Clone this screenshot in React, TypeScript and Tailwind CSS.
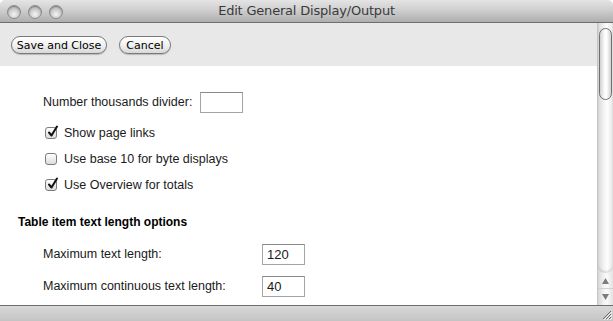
import React from 'react';

const Check: React.FC<{ checked: boolean }> = ({ checked }) => (
    <span className="relative w-[12px] h-[12px] rounded-[3px] border border-[#7d7d7d] bg-gradient-to-b from-white to-[#dcdcdc] shrink-0">
        {checked && (
            <svg className="absolute left-[1px] top-[-3px]" width="12" height="13" viewBox="0 0 12 13">
                <path d="M2 7.5 L4.5 10.5 L10 1.5" fill="none" stroke="#111" strokeWidth="2" strokeLinecap="round" strokeLinejoin="round" />
            </svg>
        )}
    </span>
);

const Light: React.FC = () => (
    <span className="w-[14px] h-[14px] rounded-full border border-[#8a8a8a] bg-[radial-gradient(circle_at_50%_70%,#f4f4f4,#c6c6c6_55%,#9c9c9c)] shadow-[inset_0_1px_1px_rgba(0,0,0,0.25)]" />
);

const AquaButton: React.FC<{ label: string; width: string }> = ({ label, width }) => (
    <button className={`${width} h-[18px] rounded-full border border-[#7a7a7a] bg-gradient-to-b from-white via-[#f2f2f2] to-[#d8d8d8] text-[11px] text-black leading-none shadow-[0_1px_1px_rgba(0,0,0,0.2)]`}>
        {label}
    </button>
);

const App: React.FC = () => {
    const options = [
        { label: 'Show page links', checked: true },
        { label: 'Use base 10 for byte displays', checked: false },
        { label: 'Use Overview for totals', checked: true },
    ];

    return (
        <div className="w-[613px] h-[321px] flex flex-col overflow-hidden bg-white font-['Liberation_Sans',Arial,sans-serif]">
            {/* title bar */}
            <div className="relative h-[23px] shrink-0 flex items-center rounded-t-[5px] border-b border-[#6e6e6e] bg-[linear-gradient(#e4e4e4,#cfcfcf_45%,#aeaeae)]">
                <div className="flex gap-[7px] pl-[7px] pt-[1px]">
                    <Light />
                    <Light />
                    <Light />
                </div>
                <div className="absolute inset-x-0 top-0 h-[22px] flex items-center justify-center text-[13px] text-[#3a3a3a] font-['DejaVu_Sans',sans-serif] tracking-[-0.2px]">
                    Edit General Display/Output
                </div>
            </div>

            <div className="flex-1 flex min-h-0">
                <div className="flex-1 flex flex-col">
                    {/* toolbar */}
                    <div className="h-[43px] shrink-0 bg-[#e8e8e8] flex items-start pt-[13px] pl-[11px] gap-[12px] font-['DejaVu_Sans',sans-serif]">
                        <AquaButton label="Save and Close" width="w-[96px]" />
                        <AquaButton label="Cancel" width="w-[52px]" />
                    </div>

                    {/* content */}
                    <div className="flex-1 pt-[26px] text-[12.5px] text-[#1a1a1a]">
                        <div className="h-[21px] flex items-center pl-[43px]">
                            <span>Number thousands divider:</span>
                            <input className="ml-[8px] w-[43px] h-[21px] border border-[#a5a5a5] border-t-[#8a8a8a] bg-white outline-none" />
                        </div>

                        <div className="mt-[10px] flex flex-col gap-[6px] pl-[45px]">
                            {options.map(o => (
                                <label key={o.label} className="h-[20px] flex items-center gap-[7px]">
                                    <Check checked={o.checked} />
                                    <span>{o.label}</span>
                                </label>
                            ))}
                        </div>

                        <div className="mt-[19px] h-[16px] flex items-center pl-[18px] text-[12px] font-bold text-black">
                            Table item text length options
                        </div>

                        <div className="mt-[14px] h-[21px] flex items-center pl-[43px]">
                            <span className="w-[219px]">Maximum text length:</span>
                            <input defaultValue="120" className="w-[43px] h-[21px] px-[4px] border border-[#a5a5a5] border-t-[#8a8a8a] bg-white text-[13px] outline-none" />
                        </div>
                        <div className="mt-[11px] h-[21px] flex items-center pl-[43px]">
                            <span className="w-[219px]">Maximum continuous text length:</span>
                            <input defaultValue="40" className="w-[43px] h-[21px] px-[4px] border border-[#a5a5a5] border-t-[#8a8a8a] bg-white text-[13px] outline-none" />
                        </div>
                    </div>
                </div>

                {/* scrollbar */}
                <div className="w-[16px] shrink-0 flex flex-col border-l border-[#c4c4c4] bg-[linear-gradient(90deg,#d6d6d6,#f4f4f4_40%,#fafafa_60%,#e2e2e2)]">
                    <div className="flex-1 relative rounded-b-[7px] bg-[linear-gradient(90deg,#dadada,#f6f6f6_45%,#ffffff_60%,#e6e6e6)] shadow-[inset_0_-2px_2px_rgba(0,0,0,0.12)]">
                        <div className="absolute left-[1px] right-[1px] top-[5px] h-[72px] rounded-[7px] border border-[#6f6f6f] bg-[linear-gradient(90deg,#d0d0d0,#fafafa_40%,#ffffff_60%,#cfcfcf)]" />
                    </div>
                    <div className="h-[16px] flex items-center justify-center border-b border-[#d0d0d0] text-[#7c7c7c]">
                        <svg width="7" height="6" viewBox="0 0 7 6"><path d="M3.5 0 L7 6 L0 6 Z" fill="currentColor" /></svg>
                    </div>
                    <div className="h-[16px] flex items-center justify-center text-[#7c7c7c]">
                        <svg width="7" height="6" viewBox="0 0 7 6"><path d="M0 0 L7 0 L3.5 6 Z" fill="currentColor" /></svg>
                    </div>
                </div>
            </div>

            {/* bottom bar */}
            <div className="relative h-[16px] shrink-0 border-t border-[#6e6e6e] bg-[linear-gradient(#d8d8d8,#c4c4c4)]">
                <svg className="absolute right-[1px] bottom-[1px]" width="12" height="12" viewBox="0 0 12 12">
                    <path d="M11 3 L3 11 M11 6 L6 11 M11 9 L9 11" stroke="#6a6a6a" strokeWidth="1" />
                    <path d="M12 4 L4 12 M12 7 L7 12 M12 10 L10 12" stroke="#f4f4f4" strokeWidth="1" />
                </svg>
            </div>
        </div>
    );
};

export default App;
